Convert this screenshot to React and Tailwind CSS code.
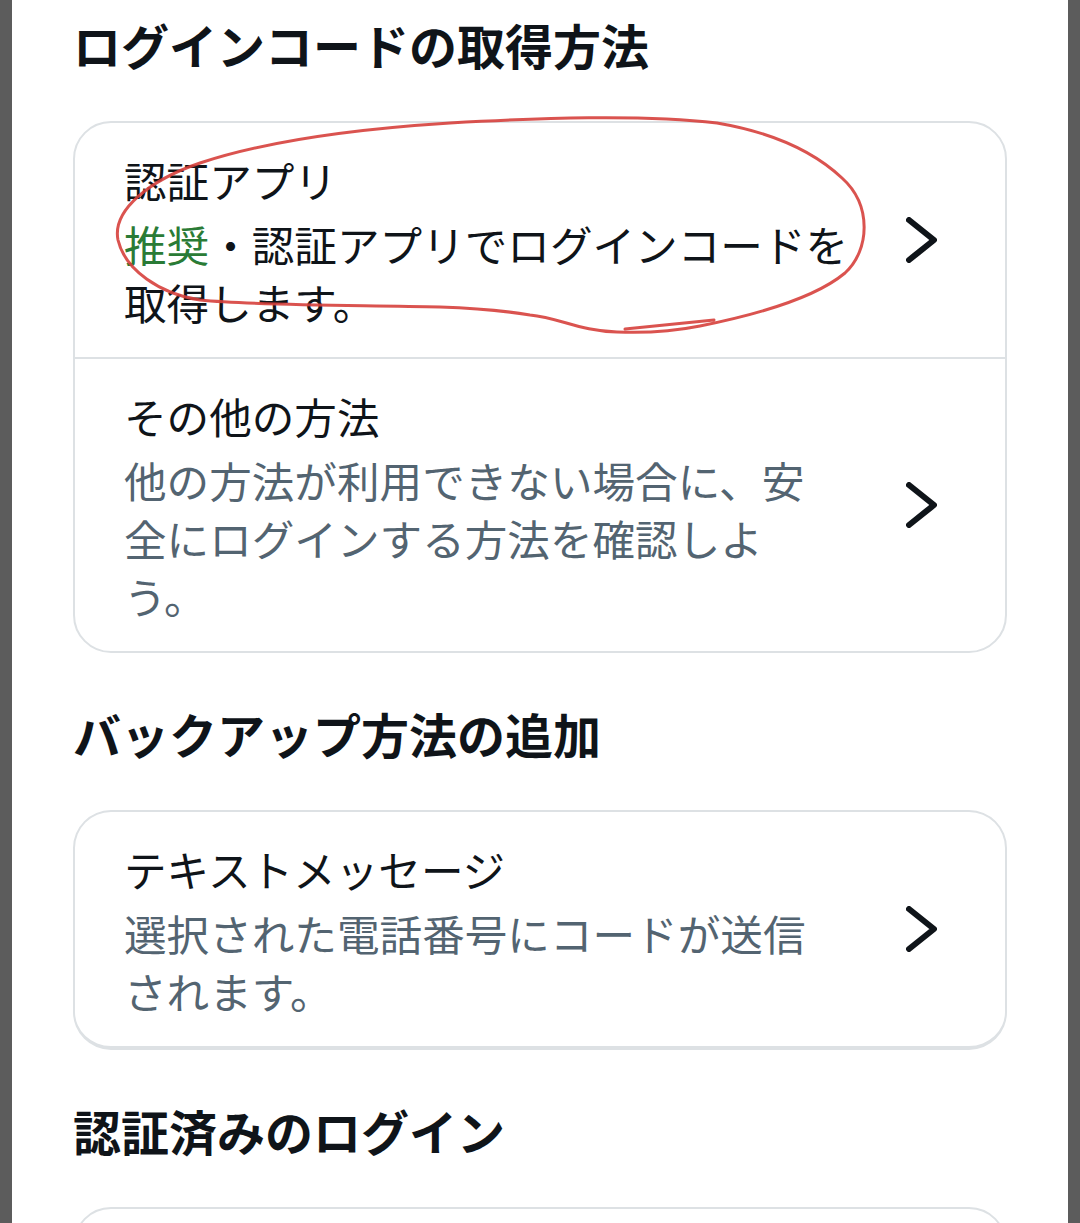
import { Fragment } from "react";

const font = { fontFamily: '"Noto Sans CJK JP", "Noto Sans", sans-serif' };

function Chevron() {
  return (
    <svg width="31" height="46" viewBox="0 0 31 46" className="shrink-0 ml-[54px]" aria-hidden="true">
      <polyline points="3,3 28,23 3,43" fill="none" stroke="#0f1419" strokeWidth="6" strokeLinecap="round" strokeLinejoin="round" />
    </svg>
  );
}

function Row({ title, lines, first }) {
  return (
    <div className={(first ? "" : "border-t-2 border-[#dde1e4] ") + "flex items-center pl-[49px] pr-[68px] pt-[26px] pb-[26px]"}>
      <div className="flex-1 min-w-0">
        <div className="text-[42.6px] leading-[62px] text-[#0f1419]">{title}</div>
        <div className="mt-1 text-[42.6px] leading-[58px] text-[#536471] whitespace-nowrap">
          {lines.map((l, i) => (
            <Fragment key={i}>
              {i > 0 && <br />}
              {l}
            </Fragment>
          ))}
        </div>
      </div>
      <Chevron />
    </div>
  );
}

function Heading({ children, top }) {
  return (
    <h2 className={(top ? "" : "mt-[48px] ") + "mb-[45px] text-[48px] leading-[64px] font-bold text-[#0f1419]"}>
      {children}
    </h2>
  );
}

export default function App() {
  return (
    <div className="min-h-screen bg-[#5c5c5c] px-[12px]" style={font}>
      <div className="relative bg-white min-h-screen px-[61px] pt-[12px] pb-10">
        <Heading top>ログインコードの取得方法</Heading>
        <div className="rounded-[38px] border-2 border-[#dde1e4] overflow-hidden">
          <Row
            first
            title="認証アプリ"
            lines={[
              <Fragment key="a">
                <span className="text-[#2a7b36]">推奨</span>
                <span className="text-[#0f1419]">・認証アプリでログインコードを</span>
              </Fragment>,
              <span key="b" className="text-[#0f1419]">取得します。</span>,
            ]}
          />
          <Row
            title="その他の方法"
            lines={["他の方法が利用できない場合に、安", "全にログインする方法を確認しよ", "う。"]}
          />
        </div>

        <Heading>バックアップ方法の追加</Heading>
        <div className="rounded-[38px] border-2 border-b-4 border-[#dde1e4] overflow-hidden">
          <Row first title="テキストメッセージ" lines={["選択された電話番号にコードが送信", "されます。"]} />
        </div>

        <Heading>認証済みのログイン</Heading>
        <div className="h-[160px] rounded-[38px] border-2 border-[#dde1e4]" />

        {/* hand-drawn red circle on top of the first option */}
        <svg
          className="absolute left-[-12px] top-0 pointer-events-none"
          width="1080"
          height="1223"
          viewBox="0 0 1080 1223"
          aria-hidden="true"
        >
          <path
            d="M 617,332 C 580,331 560,318 530,315 C 500,310 470,308 440,307 C 360,305 260,306 200,300 C 160,294 125,270 118,240 C 112,210 150,180 200,163 C 260,143 340,130 450,123 C 540,118 640,114 717,123 C 770,132 812,150 842,178 C 872,205 870,250 845,273 C 815,298 760,314 700,326 C 670,332 640,333 617,332 M 625,329 L 714,320"
            fill="none"
            stroke="#d6403c"
            strokeOpacity="0.9"
            strokeWidth="3"
            strokeLinecap="round"
            strokeLinejoin="round"
          />
        </svg>
      </div>
    </div>
  );
}
